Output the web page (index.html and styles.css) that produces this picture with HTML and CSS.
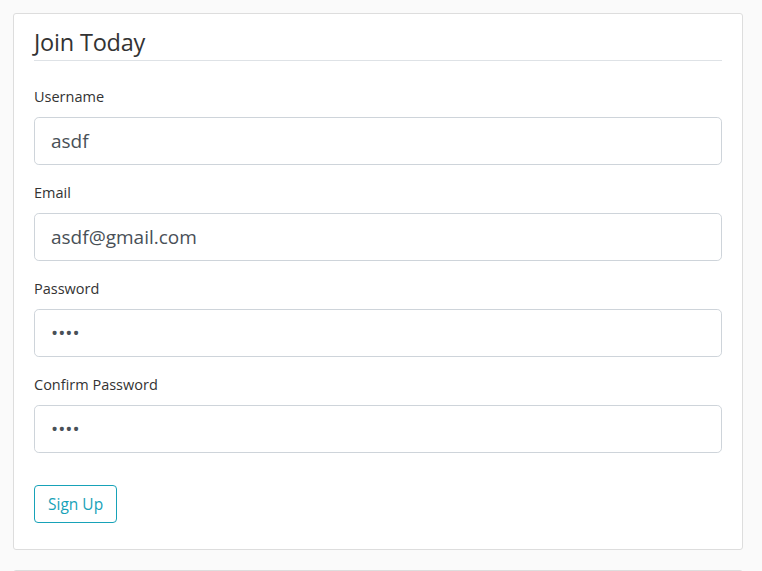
FILE: index.html
```html
<!DOCTYPE html>
<html lang="en">
<head>
<meta charset="utf-8">
<title>Join Today</title>
<link rel="stylesheet" href="styles.css">
</head>
<body>
<main class="page">
  <div class="content-section">
    <form class="form">
      <fieldset class="form-group">
        <legend class="legend">Join Today</legend>
        <div class="form-group">
          <label class="label" for="username">Username</label>
          <input class="form-control" id="username" type="text" value="asdf">
        </div>
        <div class="form-group">
          <label class="label" for="email">Email</label>
          <input class="form-control" id="email" type="text" value="asdf@gmail.com">
        </div>
        <div class="form-group">
          <label class="label" for="password">Password</label>
          <input class="form-control" id="password" type="password" value="asdf">
        </div>
        <div class="form-group">
          <label class="label" for="confirm">Confirm Password</label>
          <input class="form-control" id="confirm" type="password" value="asdf">
        </div>
      </fieldset>
      <div class="form-group">
        <button class="btn-outline-info" type="button">Sign Up</button>
      </div>
    </form>
  </div>
  <div class="content-section next"></div>
</main>
</body>
</html>
```

FILE: styles.css
```css
* { box-sizing: border-box; }
html, body { margin: 0; padding: 0; }
body {
  background: #fafafa;
  color: #333333;
  font-family: "Open Sans", "Noto Sans", sans-serif;
  font-size: 16px;
  line-height: 1.5;
}
.page {
  padding: 13px 19px 0 13px;
}
.content-section {
  background: #ffffff;
  padding: 10px 20px;
  border: 1px solid #dddddd;
  border-radius: 3px;
  margin-bottom: 20px;
}
.content-section.next {
  height: 40px;
}
.form { margin: 0; }
fieldset.form-group {
  border: 0;
  padding: 0;
  margin: 0 0 16px 0;
  min-width: 0;
}
.form-group { margin-bottom: 16px; }
.legend {
  display: block;
  width: 100%;
  padding: 0;
  font-size: 23.5px;
  line-height: 36px;
  border-bottom: 1px solid #dee2e6;
  margin-bottom: 24px;
  color: #333333;
  letter-spacing: -0.2px;
}
.label {
  display: block;
  margin-bottom: 8px;
  font-size: 14.5px;
  line-height: 24px;
}
.form-control {
  display: block;
  width: 100%;
  height: 48px;
  padding: 8px 16px;
  font-family: inherit;
  font-size: 19px;
  line-height: 30px;
  color: #495057;
  background: #ffffff;
  border: 1px solid #ced4da;
  border-radius: 4.8px;
  outline: none;
}
.btn-outline-info {
  display: block;
  height: 38px;
  padding: 6px 13px;
  font-family: inherit;
  font-size: 15.5px;
  line-height: 24px;
  color: #17a2b8;
  background: transparent;
  border: 1px solid #17a2b8;
  border-radius: 4px;
  cursor: pointer;
}
```
